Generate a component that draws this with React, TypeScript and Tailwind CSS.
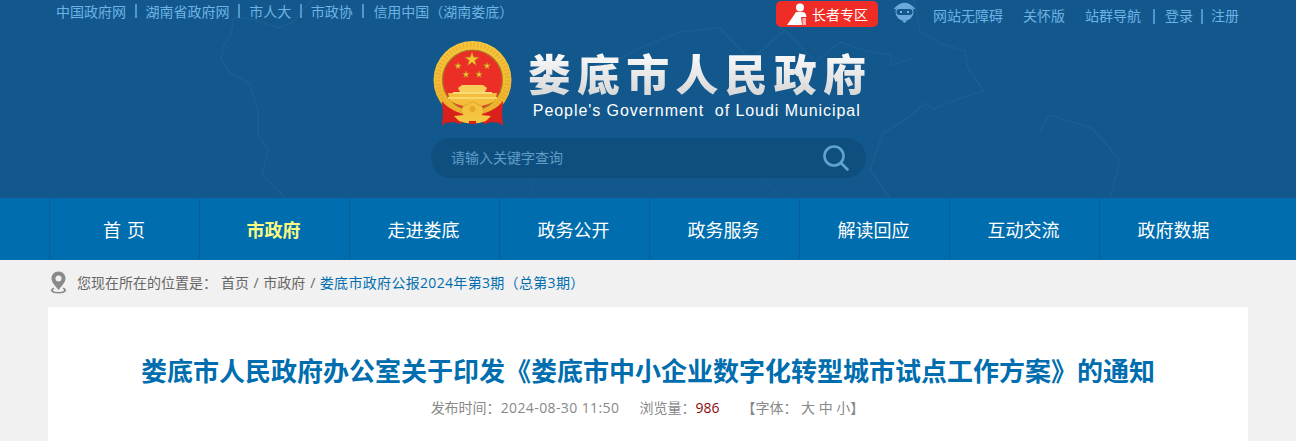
import React from "react";

const cjk = { fontFamily: '"Noto Sans CJK SC", "Noto Sans", sans-serif' };
const mixed = { fontFamily: '"Open Sans", "Noto Sans CJK SC", sans-serif' };

function Emblem() {
  const star = (cx: number, cy: number, r: number) => {
    const pts: string[] = [];
    for (let i = 0; i < 10; i++) {
      const a = -Math.PI / 2 + (i * Math.PI) / 5;
      const rad = i % 2 === 0 ? r : r * 0.38;
      pts.push(`${(cx + rad * Math.cos(a)).toFixed(2)},${(cy + rad * Math.sin(a)).toFixed(2)}`);
    }
    return <polygon points={pts.join(" ")} fill="#f6c534" stroke="#a8791a" strokeWidth="0.4" />;
  };
  return (
    <svg width="80" height="86" viewBox="0 0 80 86" className="shrink-0">
      <defs>
        <linearGradient id="g1" x1="0" y1="0" x2="0" y2="1">
          <stop offset="0" stopColor="#f8c83e" />
          <stop offset="1" stopColor="#eeb02c" />
        </linearGradient>
      </defs>
      <circle cx="39.5" cy="39" r="39" fill="url(#g1)" />
      <circle cx="39.5" cy="39" r="35" fill="none" stroke="#e3a52a" strokeWidth="5" strokeDasharray="1.6 2" opacity="0.6" />
      <circle cx="39.5" cy="39" r="30" fill="#ec2f26" stroke="#a8801f" strokeWidth="1.2" />
      {star(39, 18.5, 7.5)}
      {star(25, 25, 3.7)}
      {star(54, 25, 3.7)}
      {star(33, 33.5, 3.7)}
      {star(46, 33.5, 3.7)}
      <path d="M15 52 H64 L62 60 Q39.5 72 17 60Z" fill="#f4bd3c" />
      <path d="M25 47 L29 44 H50 L54 47 L52 51 H27Z" fill="#f7cf58" />
      <rect x="20" y="51" width="39" height="2" fill="#f9dc7a" />
      <rect x="15" y="56" width="49" height="2" fill="#f9d86a" />
      <path d="M9 60 Q15 68 27 72 Q33 74 34 76 L28 83 L20 81 L12 82 L9 85 L10 72Z" fill="#d9201a" />
      <path d="M70 60 Q64 68 52 72 Q46 74 45 76 L51 83 L59 81 L67 82 L70 85 L69 72Z" fill="#d9201a" />
      <path d="M28 70 Q30 63 34 64 Q39.5 58 45 64 Q49 63 51 70 L48 75 H31Z" fill="#f4c23e" stroke="#c98f20" strokeWidth="0.5" />
      <path d="M21 75 L31 74 H48 L58 75 L53 80 Q39.5 85 26 80Z" fill="#f5c642" />
      <circle cx="39.5" cy="68" r="3" fill="#e8a825" />
      <rect x="36" y="80" width="7" height="3" fill="#d9201a" />
    </svg>
  );
}

function MapLines() {
  return (
    <svg className="absolute left-0 top-0 pointer-events-none" width="1296" height="198" viewBox="0 0 1296 198" fill="none" stroke="#2a6b9c" strokeWidth="1.2" opacity="0.4">
      <path d="M312 0 L293 22 L279 28 L255 20 L234 17 L231 34 L224 45 L221 59 L229 72 L250 84 L258 110 L258 134 L268 150 L262 175 L285 198" />
      <path d="M914 0 L920 31 L941 44 L965 51 L968 68 L984 91 L958 99 L934 109 L925 103 L905 120 L883 133 L870 170 L890 198" />
      <path d="M1040 132 L1049 115 L1092 128 L1120 160 L1110 198" />
      <path d="M866 51 L890 55 L892 65 L914 58" />
      <path d="M680 32 L720 28 L750 60 L785 30 L815 62 L840 42 L866 51" />
      <path d="M600 70 L640 48 L680 32" />
      <path d="M600 70 L580 120 L545 150 L530 198" opacity="0.5" />
      <path d="M700 130 L740 150 L780 198" opacity="0.5" />
    </svg>
  );
}

const TopSep = () => <span className="w-[2px] h-[14px] bg-[#4f97cf] mx-[8.8px]" />;

const navItems = ["首 页", "市政府", "走进娄底", "政务公开", "政务服务", "解读回应", "互动交流", "政府数据"];

export default function App() {
  return (
    <div className="h-[441px] overflow-hidden bg-[#f1f1f1] text-[14px]" style={cjk}>
      <header className="relative h-[198px] bg-[#12588d] overflow-hidden">
        <MapLines />
        <div className="relative w-[1200px] mx-auto">
          <div className="flex justify-between h-[30px]">
            <div className="flex items-center h-[22px] pl-[8px] text-[14px] text-[#6db3e4]">
              <span>中国政府网</span>
              <TopSep />
              <span>湖南省政府网</span>
              <TopSep />
              <span>市人大</span>
              <TopSep />
              <span>市政协</span>
              <TopSep />
              <span className="ml-px">信用中国（湖南娄底）</span>
            </div>
            <div className="flex items-start text-[14px] text-[#6db3e4] pr-[9px]">
              <div className="flex items-center h-[26px] w-[102px] mt-[1px] rounded-[5px] bg-[#f02c26] text-white pl-[11px] gap-[5px]">
                <svg width="20" height="22" viewBox="0 0 20 22" fill="#fff">
                  <circle cx="13" cy="4.5" r="4" />
                  <path d="M9 9 H15 Q18.5 9 19 12 L19.5 14 H14 L15 22 H0 L5 15 Z" />
                  <rect x="15.5" y="15" width="3.5" height="7" fill="#f8b5ae" />
                </svg>
                <span className="text-[14px] whitespace-nowrap">长者专区</span>
              </div>
              <svg className="ml-[15px] mt-[1px]" width="24" height="22" viewBox="0 0 24 22">
                <circle cx="11.5" cy="11" r="9" fill="#6aa9dc" />
                <path d="M1.5 8 Q11.5 -3 21.5 8" fill="none" stroke="#6aa9dc" strokeWidth="1.6" />
                <rect x="3.5" y="8" width="16" height="6" rx="3" fill="#12588d" />
                <circle cx="8" cy="11" r="1" fill="#a9d3f1" />
                <circle cx="15" cy="11" r="1" fill="#a9d3f1" />
                <path d="M9 20 L11.5 22 L14 20Z" fill="#6aa9dc" />
              </svg>
              <span className="ml-[16px] mt-[5px]">网站无障碍</span>
              <span className="ml-[20px] mt-[5px]">关怀版</span>
              <span className="ml-[20px] mt-[5px]">站群导航</span>
              <span className="w-[2px] h-[15px] bg-[#4f97cf] ml-[12px] mt-[9px]" />
              <span className="ml-[10px] mt-[5px]">登录</span>
              <span className="w-[2px] h-[15px] bg-[#4f97cf] ml-[8px] mt-[9px]" />
              <span className="ml-[8px] mt-[5px]">注册</span>
            </div>
          </div>
          <div className="flex justify-center items-start mt-[11px] h-[97px] pl-[9px]">
            <Emblem />
            <div className="ml-[15px]">
              <div className="text-[43px] leading-[50px] font-black tracking-[6.2px] whitespace-nowrap bg-gradient-to-b from-white to-[#d6d6d6] bg-clip-text text-transparent mt-[6px]">
                娄底市人民政府
              </div>
              <div className="text-[16px] leading-[20px] mt-[4px] ml-[5px] tracking-[0.94px] text-white whitespace-pre" style={{ fontFamily: '"Liberation Sans", sans-serif' }}>
                {"People's Government  of Loudi Municipal"}
              </div>
            </div>
          </div>
          <div className="flex items-center justify-between ml-[383px] w-[435px] h-[40px] rounded-[20px] bg-[#0f4f80] pl-[20px] pr-[17px]">
            <span className="text-[14px] text-[#5f9cc6] -mt-[2px]">请输入关键字查询</span>
            <svg width="26" height="26" viewBox="0 0 26 26" fill="none" stroke="#5fa4cf" strokeWidth="2.6">
              <circle cx="11" cy="11" r="9.5" />
              <path d="M18 18 L24.5 24.5" strokeLinecap="round" />
            </svg>
          </div>
        </div>
      </header>

      <nav className="h-[62px] bg-[#006eae]">
        <ul className="w-[1200px] mx-auto h-full flex pl-px">
          {navItems.map((item, i) => (
            <li key={item} className={`w-[150px] shrink-0 flex items-center justify-center border-l border-[#0b5f96] text-[18px] ${i === 1 ? "text-[#fbfb84] font-bold" : "text-white"} ${i === 0 ? "tracking-[1px]" : "pr-[2px]"}`}>
              {item}
            </li>
          ))}
        </ul>
      </nav>

      <div className="w-[1200px] mx-auto">
        <div className="flex items-center h-[45px] text-[14px] text-[#666] pl-[2px] whitespace-nowrap" style={mixed}>
          <svg width="17" height="23" viewBox="0 0 17 23" className="shrink-0">
            <path d="M8.5 0.5 C4 0.5 1.5 4 1.5 7.5 C1.5 11.5 6 15.5 8.5 19 C11 15.5 15.5 11.5 15.5 7.5 C15.5 4 13 0.5 8.5 0.5Z" fill="#8a8a8a" />
            <circle cx="8.5" cy="7.5" r="3" fill="#f1f1f1" />
            <path d="M3.5 16.5 Q0.5 18 1 20 Q2.5 22.5 8.5 22.5 Q14.5 22.5 16 20 Q16.5 18 13.5 16.5 L12.5 17.5 Q14.5 18.5 14 19.8 Q12.5 21 8.5 21 Q4.5 21 3 19.8 Q2.5 18.5 4.5 17.5Z" fill="#8a8a8a" />
          </svg>
          <span className="ml-[10px]">您现在所在的位置是：</span>
          <span className="ml-[4px]">首页</span>
          <span className="mx-[4.5px]">/</span>
          <span>市政府</span>
          <span className="mx-[4.5px] ml-[5px]">/</span>
          <span className="text-[#006eae] tracking-[0.32px]">娄底市政府公报2024年第3期（总第3期）</span>
        </div>
        <main className="bg-white h-[200px] mt-[2px] pt-[43px]">
          <h1 className="text-[26px] leading-[40px] font-bold text-center text-[#006eae] whitespace-nowrap">
            娄底市人民政府办公室关于印发《娄底市中小企业数字化转型城市试点工作方案》的通知
          </h1>
          <div className="flex justify-center mt-[8px] pr-px text-[14px] leading-[20px] text-[#888] whitespace-pre" style={mixed}>
            <span>发布时间：<span className="tracking-[0.4px]">2024-08-30 11:50</span></span>
            <span className="ml-[20px]">浏览量：<span className="text-[#8a0a0a]">986</span></span>
            <span className="ml-[22px]">【字体： 大 中 小】</span>
          </div>
        </main>
      </div>
    </div>
  );
}
